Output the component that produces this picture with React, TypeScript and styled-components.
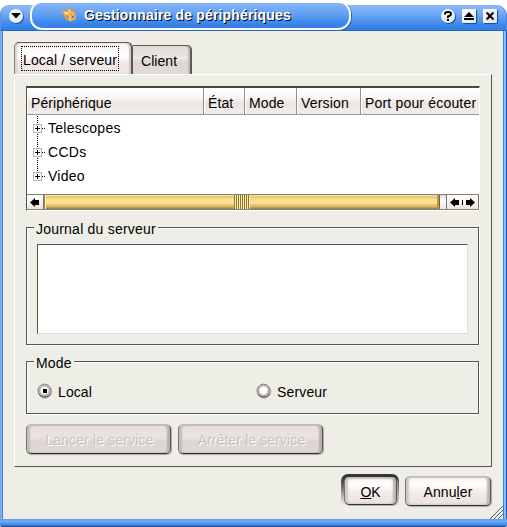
import React from "react";
import styled, { createGlobalStyle, css } from "styled-components";

const Global = createGlobalStyle`
  * { box-sizing: border-box; }
  body { margin: 0; background: #fff; overflow: hidden; }
`;

const Window = styled.div`
  width: 507px;
  height: 527px;
  display: flex;
  flex-direction: column;
  background: #fff;
  font: 14px/16px "Liberation Sans", Arial, sans-serif;
  color: #000;
`;

const TitleBar = styled.header`
  height: 31px;
  padding-top: 5px;
  flex: none;
`;

const TitleFill = styled.div`
  height: 26px;
  display: flex;
  align-items: flex-start;
  border-radius: 9px 11px 0 0;
  border-left: 1px solid #5b93dc;
  border-right: 1px solid #4a88da;
  border-bottom: 1px solid #2468bd;
  background: linear-gradient(#8dbaf8, #70a9f5 35%, #3c87eb 80%, #2f7ee4);
`;

const TitleBubble = styled.div`
  width: 321px;
  height: 28px;
  margin: -3px 0 0 7px;
  padding-left: 30px;
  display: flex;
  align-items: center;
  gap: 7px;
  border: 2px solid #fff;
  border-top-width: 1px;
  border-radius: 11px 12px 13px 12px;
  background: linear-gradient(#84b4f6, #66a3f4 40%, #3b86eb 80%, #3480e8);
  box-shadow: 1px 1px 1px #2868b8;
  & > svg { margin-bottom: 2px; }
`;

const Title = styled.h1<{ $spacing: number }>`
  margin: 0 0 1px;
  font: bold 14px/16px "Liberation Sans", Arial, sans-serif;
  letter-spacing: ${(p) => p.$spacing}px;
  color: #fff;
  text-shadow: 1px 1px 0 #000;
  white-space: nowrap;
`;

const WindowButton = styled.button<{ $round?: boolean }>`
  width: 14px;
  height: 14px;
  padding: 0;
  border: 0;
  display: grid;
  place-items: center;
  border-radius: ${(p) => (p.$round ? "50%" : "1px")};
  background: linear-gradient(135deg, #fff, #dfe3ec);
  box-shadow: 1px 1px 1px #1c4c92;
`;

const MenuSlot = styled.div`
  margin: 4px 0 0 8px;
`;

const WindowButtons = styled.div`
  display: flex;
  gap: 7px;
  margin: 4px 9px 0 auto;
`;

const Body = styled.main`
  height: 488px;
  padding: 11px 10px 0 11px;
  position: relative;
  display: flex;
  flex-direction: column;
  background: #eeeee6;
  border-left: 3px solid;
  border-right: 4px solid;
  border-image: linear-gradient(90deg, #6fa4ee 0, #8db8f6 2px, #3f7fd4 2px, #3f7fd4 3px, #eee 3px, #eee 503px, #3c7fd8 503px, #3c7fd8 504px, #9cc3fa 504px, #74a9f1 506px, #2462b5 506px) 0 4 0 3;
`;

const BottomEdge = styled.div`
  height: 8px;
  border-radius: 0 0 2px 2px;
  border-bottom: 1px solid #1c4f9a;
  background: linear-gradient(#5b9cf0, #6fabfa 30%, #4e94ee 70%, #3575cc);
`;

const Tabs = styled.nav`
  height: 32px;
  display: flex;
  align-items: flex-end;
`;

const Tab = styled.button<{ $active?: boolean }>`
  flex: none;
  font: inherit;
  display: flex;
  align-items: center;
  border: 1px solid #5c5856;
  border-bottom: 0;
  ${(p) =>
    p.$active
      ? css`
          width: 119px;
          height: 32px;
          padding: 0 0 0 6px;
          border-right-width: 2px;
          border-left-color: #858280;
          border-radius: 5px 6px 0 0;
          background: linear-gradient(#f8f2f1, #fff 45%, #f2eae8 60%, #eee5e3);
          box-shadow: inset 2px 0 2px #d8d0ce, inset -2px 0 1px #cec6c3;
        `
      : css`
          width: 59px;
          height: 29px;
          padding: 1px 0 0 8px;
          border-left: 0;
          border-right-width: 2px;
          border-radius: 0 5px 0 0;
          background: linear-gradient(#e2dbd7, #ece7e3 45%, #dcd5d1 60%, #e3dcd8);
          box-shadow: inset -2px 0 1px #c2bbb7;
        `}
`;

const FocusFrame = styled.span`
  width: 98px;
  height: 25px;
  display: flex;
  align-items: center;
  padding: 2px 0 0 1px;
  border: 1px dotted #000;
`;

const Text = styled.span<{ $spacing?: number }>`
  letter-spacing: ${(p) => p.$spacing ?? 0}px;
  white-space: nowrap;
`;

const Panel = styled.section`
  width: 478px;
  height: 393px;
  padding: 12px 11px 0 11px;
  border: 1px solid #555;
  border-top-color: #fff;
  border-left-color: #fff;
`;

const ListView = styled.div`
  width: 454px;
  height: 125px;
  display: flex;
  flex-direction: column;
  border-top: 2px solid #464644;
  border-left: 1px solid #555;
  border-right: 1px solid #fff;
  border-bottom: 1px solid #fff;
  margin-top: -1px;
  background: #fff;
`;

const HeaderRow = styled.div`
  display: grid;
  grid-template-columns: 177px 41px 52px 64px 118px;
  height: 27px;
  flex: none;
`;

const HeaderCell = styled.div`
  display: flex;
  align-items: center;
  padding: 3px 0 0 4px;
  border-right: 1px solid #94908b;
  border-bottom: 1px solid #9d9893;
  background: linear-gradient(#fff, #f8f5f4 40%, #ece5e2 58%, #f2edea);
  box-shadow: inset 1px 0 #fff;
  &:last-child { border-right: 0; }
`;

const Tree = styled.ul`
  list-style: none;
  margin: 0;
  padding: 1px 0 0;
  flex: 1;
`;

const TreeRow = styled.li`
  height: 24px;
  display: flex;
  align-items: center;
  gap: 2px;
`;

const ScrollBar = styled.div`
  height: 16px;
  display: flex;
  border: solid #85806f;
  border-width: 1px 0 1px 0;
  background: #eeeae6;
`;

const ScrollEnd = styled.div<{ $width: number }>`
  width: ${(p) => p.$width}px;
  display: grid;
  place-items: center;
  border-right: 1px solid #77716b;
  background: linear-gradient(#fff, #ece5e1);
`;

const ScrollThumb = styled.div`
  width: 396px;
  display: flex;
  justify-content: center;
  border-left: 1px solid #a48d51;
  border-right: 1px solid #786230;
  background: linear-gradient(#fbe8ae, #e6c36c 2px, #fade8e 4px, #fde394 8px, #e7c46f 10px, #dbb65f 12px, #978459 13px);
  box-shadow: inset 1px 0 #fff1c3, inset -2px 0 #b99a52;
`;

const ThumbGrip = styled.span`
  width: 16px;
  background: repeating-linear-gradient(90deg, #8b7638 0 1px, #fff0b2 1px 2px);
`;

const ScrollGap = styled.div`
  flex: 1;
  background: linear-gradient(#ddd, #fff 40%, #e7e3e1);
  border-right: 1px solid #77716b;
`;

const GroupBox = styled.fieldset<{ $height: number; $top: number }>`
  position: relative;
  width: 453px;
  height: ${(p) => p.$height}px;
  margin: ${(p) => p.$top}px 0 0;
  padding: 0;
  border: 1px solid #555;
  box-shadow: 1px 1px #fff, inset 1px 1px #fbfbf8;
`;

const Legend = styled.div`
  position: absolute;
  left: 7px;
  top: -7px;
  padding: 0 2px;
  background: #eeeee6;
`;

const LogArea = styled.div`
  height: 90px;
  margin: 16px 10px 0;
  border: 1px solid #dfdfd9;
  border-top-color: #555;
  border-left-color: #555;
  background: #fff;
`;

const RadioRow = styled.div`
  display: grid;
  grid-template-columns: 219px 1fr;
  padding: 20px 0 0 9px;
`;

const RadioLabel = styled.label`
  display: flex;
  align-items: flex-start;
  gap: 5px;
  & > span { margin-top: 2px; }
`;

const ButtonRow = styled.div`
  display: flex;
  gap: 7px;
  margin-top: 10px;
`;

const PushButton = styled.button<{ $width: number; $disabled?: boolean; $height?: number }>`
  width: ${(p) => p.$width}px;
  height: ${(p) => p.$height ?? 30}px;
  padding: 2px 0 0;
  font: inherit;
  color: #000;
  border: 1px solid #777;
  border-top-color: #c1bbb8;
  border-left-color: #777;
  border-right-color: #555;
  border-bottom: 1px solid #333;
  border-radius: 5px;
  background: linear-gradient(#fbf6f4, #fffdfb 30%, #f2ebe7 55%, #eae2dd);
  box-shadow: inset 3px 0 2px #cfc8c5, inset -3px 0 2px #bbb4b0, inset 0 1px 1px #d5ceca, 1px 1px 1px #aaa6a2;
  ${(p) =>
    p.$disabled &&
    css`
      color: #c6c3bc;
      padding-left: 2px;
      text-shadow: 1px 1px #fff;
      background: linear-gradient(#e7e0dc, #e9e2de 45%, #ddd5d1 60%, #e1d9d5);
      box-shadow: inset 3px 0 2px #c3bcb9, inset -3px 0 2px #b5aeab, inset 0 1px 1px #cbc4c1, 1px 1px 1px #aaa6a2;
    `}
`;

const DialogActions = styled.footer`
  display: flex;
  justify-content: flex-end;
  gap: 6px;
  margin-top: 7px;
  padding-right: 2px;
`;

const DefaultRing = styled.div`
  width: 58px;
  height: 33px;
  padding: 3px 2px 2px 3px;
  border-radius: 7px;
  background: linear-gradient(#353535 10%, #74716f 40%, #d7d3cf 80%, #f8f8f3);
`;

const CancelSlot = styled.div`
  padding-top: 2px;
`;

const Grip = styled.svg`
  position: absolute;
  right: 0;
  bottom: 0;
`;

const Expander = ({ last }: { last?: boolean }) => (
  <svg width="19" height="24" shapeRendering="crispEdges" fill="none">
    <path d={last ? "M10.500 0V8" : "M10.500 0V24"} stroke="#000" strokeDasharray="1 1" />
    <path d="M15 12.500H19" stroke="#000" strokeDasharray="1 1" />
    <rect x="6.500" y="8.500" width="8" height="8" fill="#fff" stroke="#b9b9b2" />
    <path d="M8 12.500H13M10.500 10V15" stroke="#000" />
  </svg>
);

const Radio = ({ checked }: { checked?: boolean }) => (
  <svg width="17" height="17" fill="none">
    <circle cx="9" cy="9.500" r="6.800" stroke="#b8b2ae" />
    <circle cx="8.500" cy="8.500" r="6.400" fill="#e7e1dd" stroke="#858080" />
    <path d="M3 12A6.800 6.800 0 0 0 14.500 12" stroke="#4d4a49" />
    <circle cx="8.500" cy="8.500" r="4.800" fill="#fff" stroke="#8d8886" />
    {checked && <path d="M7 7h4v4H7z" fill="#000" />}
  </svg>
);

const AppIcon = () => (
  <svg width="15" height="15" viewBox="0 0 15 15">
    <path d="M0 4 4.500 4.500 7 .5 9 3 13 5.500 14 9 13 13 8 14.500 4 12 2 8Z" fill="#f4a33a" stroke="#e0913a" strokeWidth=".6" />
    <path d="M1.500 4.800 5 5 8 6.500 5 7.500 3 7Z" fill="#ffe19b" />
    <path d="M7 2 8.500 4.500 6.500 4.500Z" fill="#fff0c4" />
    <path d="M4 8.500 6.500 9 6.500 12Z" fill="#5c89c0" />
    <path d="M9 9.500Q11 7 12.800 9V11.500L9 12Z" fill="#5583bb" stroke="#ffd88a" strokeWidth=".7" />
    <path d="M8 5 12 6.500M7.500 8 8 13.500" stroke="#ffd571" fill="none" />
  </svg>
);

const columns = [
  { name: "Périphérique", spacing: 0.1 },
  { name: "État", spacing: 0.1 },
  { name: "Mode", spacing: 0.1 },
  { name: "Version", spacing: 0.2 },
  { name: "Port pour écouter", spacing: 0.18 },
];

const devices = ["Telescopes", "CCDs", "Video"];

export default function App() {
  return (
    <Window>
      <Global />
      <TitleBar>
        <TitleFill>
          <MenuSlot>
            <WindowButton $round aria-label="Menu">
              <svg width="10" height="6"><path d="M0 0H10L5 5.500Z" /></svg>
            </WindowButton>
          </MenuSlot>
          <TitleBubble>
            <AppIcon />
            <Title $spacing={0.16}>Gestionnaire de périphériques</Title>
          </TitleBubble>
          <WindowButtons>
            <WindowButton $round aria-label="Aide">
              <svg width="8" height="10" fill="none" stroke="#000" strokeWidth="2">
                <path d="M1 3.500V2.500Q1 1 4 1T7 3Q7 4.500 4 5.500V7M4 8V10" />
              </svg>
            </WindowButton>
            <WindowButton aria-label="Enrouler">
              <svg width="10" height="9"><path d="M5 0 10 5H0ZM0 6H10V8H0Z" /></svg>
            </WindowButton>
            <WindowButton aria-label="Fermer">
              <svg width="8" height="8" stroke="#000" strokeWidth="2.200"><path d="M.5.500 7.500 7.500M7.500.500.500 7.500" /></svg>
            </WindowButton>
          </WindowButtons>
        </TitleFill>
      </TitleBar>
      <Body>
        <Tabs>
          <Tab $active>
            <FocusFrame><Text $spacing={0.15}>Local / serveur</Text></FocusFrame>
          </Tab>
          <Tab><Text $spacing={0.05}>Client</Text></Tab>
        </Tabs>
        <Panel>
          <ListView>
            <HeaderRow>
              {columns.map((c) => (
                <HeaderCell key={c.name}><Text $spacing={c.spacing}>{c.name}</Text></HeaderCell>
              ))}
            </HeaderRow>
            <Tree>
              {devices.map((d, i) => (
                <TreeRow key={d}>
                  <Expander last={i === devices.length - 1} />
                  <Text $spacing={0.27}>{d}</Text>
                </TreeRow>
              ))}
            </Tree>
            <ScrollBar>
              <ScrollEnd $width={17}>
                <svg width="10" height="9"><path d="M0 4.500 5 0V2H9V7H5V9Z" /></svg>
              </ScrollEnd>
              <ScrollThumb><ThumbGrip /></ScrollThumb>
              <ScrollGap />
              <ScrollEnd $width={32}>
                <svg width="25" height="9"><path d="M0 4.500 5 0V2H9V7H5V9ZM25 4.500 20 0V2H16V7H20V9ZM12 2H13V7H12Z" /></svg>
              </ScrollEnd>
            </ScrollBar>
          </ListView>
          <GroupBox $height={118} $top={16}>
            <Legend><Text $spacing={0.22}>Journal du serveur</Text></Legend>
            <LogArea />
          </GroupBox>
          <GroupBox $height={53} $top={16}>
            <Legend><Text $spacing={0.2}>Mode</Text></Legend>
            <RadioRow>
              <RadioLabel><Radio checked /><Text $spacing={0.1}>Local</Text></RadioLabel>
              <RadioLabel><Radio /><Text $spacing={0.15}>Serveur</Text></RadioLabel>
            </RadioRow>
          </GroupBox>
          <ButtonRow>
            <PushButton $width={145} $disabled><Text $spacing={0.15}>Lancer le service</Text></PushButton>
            <PushButton $width={145} $disabled><Text $spacing={0.1}>Arrêter le service</Text></PushButton>
          </ButtonRow>
        </Panel>
        <DialogActions>
          <DefaultRing>
            <PushButton $width={53} $height={28}><Text><u>O</u>K</Text></PushButton>
          </DefaultRing>
          <CancelSlot>
            <PushButton $width={86}><Text $spacing={0.1}>Annu<u>l</u>er</Text></PushButton>
          </CancelSlot>
        </DialogActions>
        <Grip width="13" height="13" stroke="#555">
          <path d="M0 13 13 0M4 13 13 4M8 13 13 8" />
          <path d="M1.500 13 13 1.500M5.500 13 13 5.500" stroke="#fff" />
        </Grip>
      </Body>
      <BottomEdge />
    </Window>
  );
}
